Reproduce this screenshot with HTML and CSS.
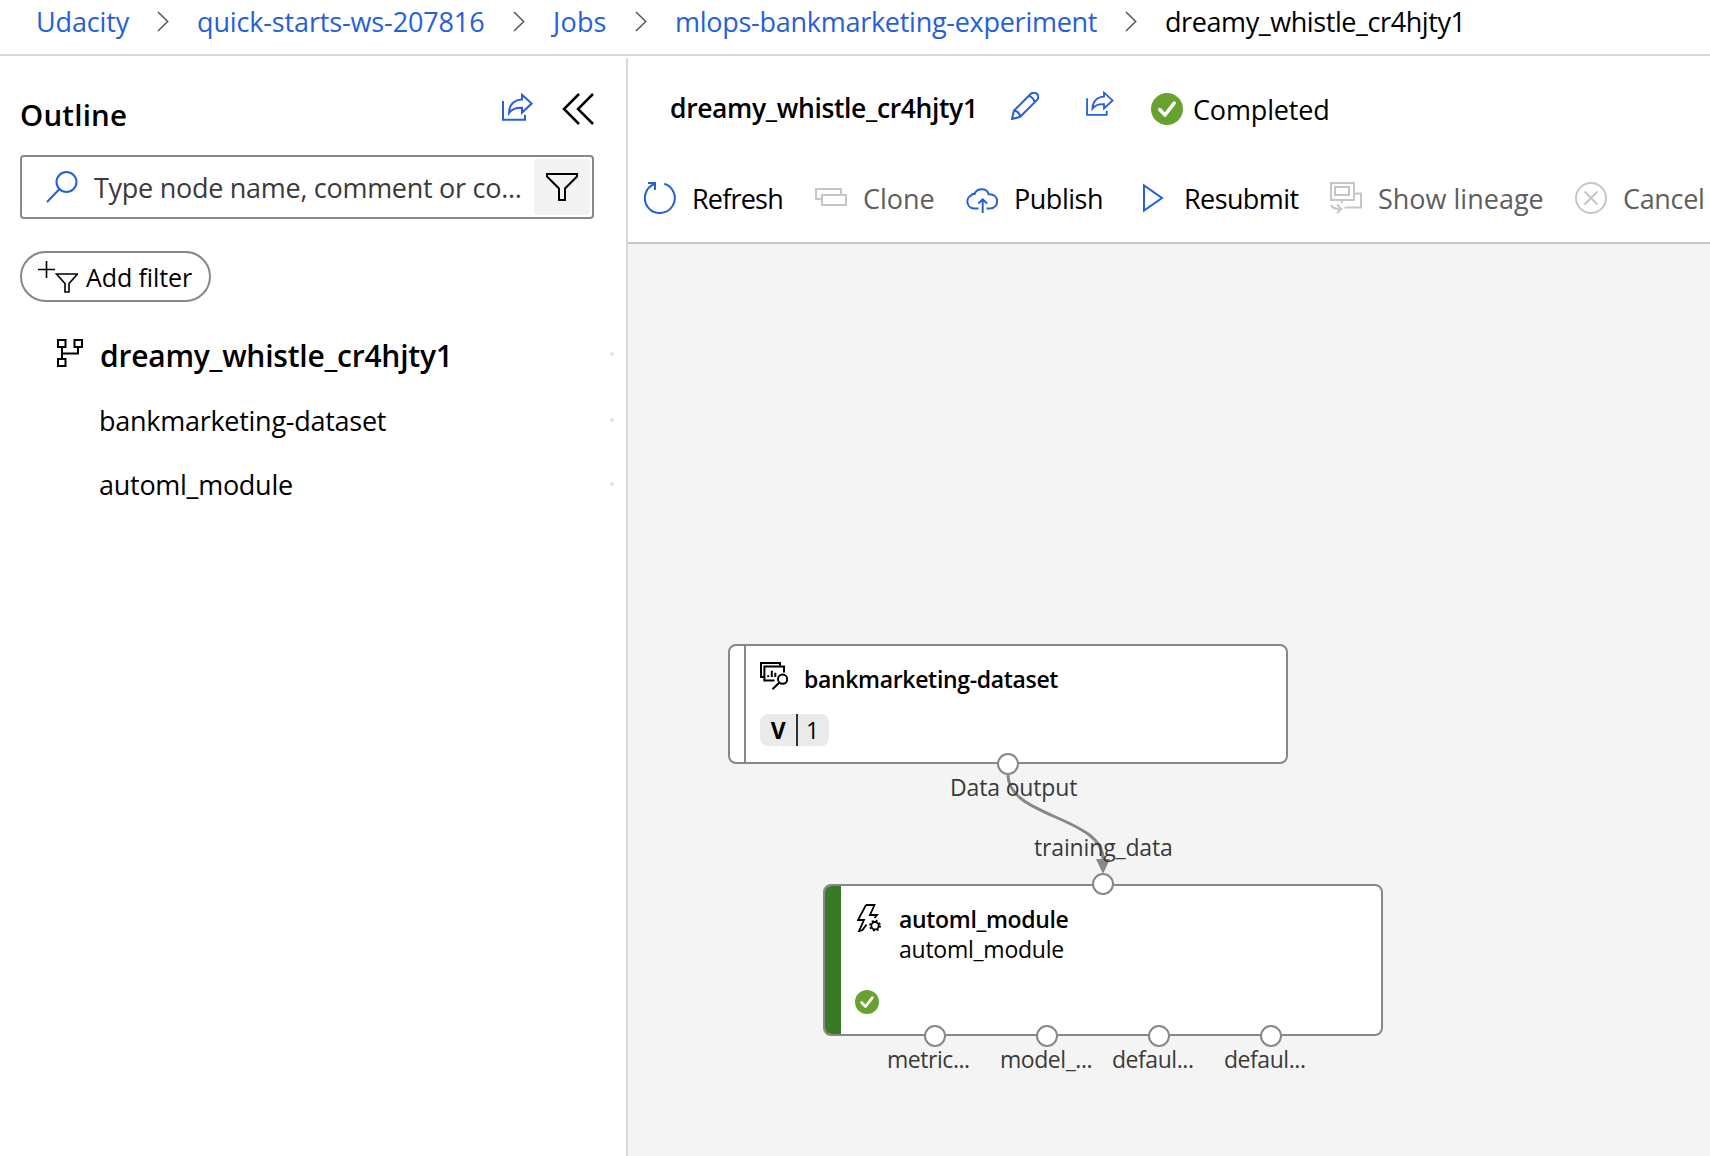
FILE: index.html
```html
<!DOCTYPE html>
<html lang="en">
<head>
<meta charset="utf-8">
<title>dreamy_whistle_cr4hjty1</title>
<link rel="stylesheet" href="styles.css">
</head>
<body>
<svg class="defs" width="0" height="0">
  <symbol id="share" viewBox="0 0 31 28"><path d="M1 8V26.8H23V22M20 1.8L29.6 10.6L20 19.6V14.8C14 14.6 9.5 16.3 7 20C7 12.5 11.5 6.8 20 6.4Z"/></symbol>
  <symbol id="check" viewBox="0 0 32 32"><circle cx="16" cy="16" r="16" fill="#69a12e"/><path d="M8.7 16.6L14 22L23.2 10.2" fill="none" stroke="#fff" stroke-width="3.6" stroke-linecap="round" stroke-linejoin="round"/></symbol>
  <symbol id="chevron" viewBox="0 0 12 21"><path d="M1 1L10.7 10.5L1 20"/></symbol>
</svg>

<nav class="breadcrumb">
  <div class="crumb crumb-org"><a>Udacity</a><svg class="sep"><use href="#chevron"/></svg></div>
  <div class="crumb crumb-workspace"><a>quick-starts-ws-207816</a><svg class="sep"><use href="#chevron"/></svg></div>
  <div class="crumb crumb-jobs"><a>Jobs</a><svg class="sep"><use href="#chevron"/></svg></div>
  <div class="crumb crumb-experiment"><a>mlops-bankmarketing-experiment</a><svg class="sep"><use href="#chevron"/></svg></div>
  <div class="crumb crumb-current">dreamy_whistle_cr4hjty1</div>
</nav>

<div class="workspace">
  <aside class="sidebar">
    <header class="outline-head">
      <h2>Outline</h2>
      <svg class="line-icon share-icon"><use href="#share"/></svg>
      <svg class="collapse-icon" viewBox="0 0 32 32"><path d="M17 1L2 16L17 31M31 1L16 16L31 31"/></svg>
    </header>
    <div class="search">
      <svg class="line-icon search-icon" viewBox="0 0 32 32"><circle cx="20.5" cy="11" r="10"/><path d="M13.5 18L1 31"/></svg>
      <span class="placeholder">Type node name, comment or co...</span>
      <div class="filter-btn"><svg viewBox="0 0 32 28"><path d="M1 1H31V3.5L19 15.5V27H13V15.5L1 3.5Z"/></svg></div>
    </div>
    <div class="add-filter">
      <svg viewBox="0 0 40 32"><path d="M8.5 0V17M0 8.5H17"/><path d="M18.5 13H39.5L31 22.5V31H27V22.5Z"/></svg>
      <span>Add filter</span>
    </div>
    <ul class="tree">
      <li class="root"><svg viewBox="0 0 26 28"><path d="M1 1H8.5V8H1ZM17.5 1H25V8H17.5ZM1 20H8.5V27H1ZM5 8V20M5 14.5H21V8"/></svg><span>dreamy_whistle_cr4hjty1</span><i></i></li>
      <li><span>bankmarketing-dataset</span><i></i></li>
      <li><span>automl_module</span><i></i></li>
    </ul>
  </aside>

  <main class="main">
    <header class="job-head">
      <h1>dreamy_whistle_cr4hjty1</h1>
      <svg class="line-icon pencil-icon" viewBox="0 0 28 28"><path d="M1 27L3 18.6L19.6 2C22 -.2 25 .6 26.2 2.2C27.6 4 27.4 6.6 25.6 8.4L9.2 24.8ZM3 18.6C6 18.8 8.9 21.6 9.2 24.8M17.6 4C20.5 4.3 23.3 7.2 23.6 10.3"/></svg>
      <svg class="line-icon share-small"><use href="#share"/></svg>
      <svg class="status-icon"><use href="#check"/></svg>
      <span class="status">Completed</span>
    </header>
    <div class="toolbar">
      <div class="tool tool-refresh"><svg viewBox="0 0 32 32"><path d="M10.5 2A15 15 0 1 0 20.3 1.7"/><path d="M4 1H11V8"/></svg><span>Refresh</span></div>
      <div class="tool tool-clone disabled"><svg viewBox="0 0 32 32"><path d="M7 17H1V7H26V12"/><path d="M7 13H31V23H7Z"/></svg><span>Clone</span></div>
      <div class="tool tool-publish"><svg viewBox="0 0 32 32"><path d="M12.5 26.5H8A7 7 0 0 1 5.8 13Q6.3 11.5 8.5 12C11 6 20.5 5.5 22.7 12.2C34 11.5 33.5 26.5 24 26.5H20.5M16.7 31V17.5M12.3 21.5L16.7 17.3L21.1 21.5"/></svg><span>Publish</span></div>
      <div class="tool tool-resubmit"><svg viewBox="0 0 32 32"><path d="M7 3.5V28.5L25 16Z"/></svg><span>Resubmit</span></div>
      <div class="tool tool-lineage disabled"><svg viewBox="0 0 32 32"><path d="M1 1H24V18H1Z"/><path d="M5 5H19V13H5Z"/><path d="M24 11.5H31V25.5H14.5M12 18V21"/><path d="M1 23Q3 27.3 11 27M7 22.5L11.3 27L7 31"/></svg><span>Show lineage</span></div>
      <div class="tool tool-cancel disabled"><svg viewBox="0 0 32 32"><circle cx="16" cy="16" r="15"/><path d="M9.5 9.5L22.5 22.5M22.5 9.5L9.5 22.5"/></svg><span>Cancel</span></div>
    </div>

    <section class="canvas">
      <article class="node dataset-node">
        <div class="stripe"></div>
        <div class="node-body">
          <div class="node-head">
            <svg class="dataset-icon" viewBox="0 0 28 28"><path d="M20 3.5V1H1V15H4"/><path d="M14.5 18.6H4.4V4.6H24V10.5"/><path d="M8.2 15V13.3M11.8 15V8.7M15.3 15V10.7"/><circle cx="22.6" cy="17.2" r="4.6"/><path d="M19.2 20.7L12.5 27.3"/></svg>
            <div class="node-title">bankmarketing-dataset</div>
          </div>
          <div class="version"><b>V</b><span>1</span></div>
        </div>
      </article>
      <article class="node automl-node">
        <div class="stripe"></div>
        <div class="node-body">
          <div class="node-head">
            <svg class="automl-icon" viewBox="0 0 24 28"><path d="M9 1H17.5L13 11H20L17.5 14M9 1L1 16H7L2 27.2L5.5 26L9.5 20.5"/><circle cx="18" cy="21.7" r="3.7"/><circle cx="18" cy="21.7" r="5" stroke-dasharray="1.95 1.977"/></svg>
            <div><div class="node-title">automl_module</div><div class="node-subtitle">automl_module</div></div>
          </div>
          <svg class="node-status"><use href="#check"/></svg>
        </div>
      </article>
      <svg class="edges" viewBox="0 0 1082 912">
        <path d="M380 531C380 573 475 573 475 615" fill="none" stroke="#8a8886" stroke-width="3"/>
        <path d="M468 615H482L475 630Z" fill="#8a8886"/>
      </svg>
      <span class="port-label label-output">Data output</span>
      <span class="port-label label-input">training_data</span>
      <i class="port port-output"></i>
      <i class="port port-input"></i>
      <i class="port port-metrics"></i>
      <i class="port port-model"></i>
      <i class="port port-default1"></i>
      <i class="port port-default2"></i>
      <span class="port-label label-metrics">metric...</span>
      <span class="port-label label-model">model_...</span>
      <span class="port-label label-default1">defaul...</span>
      <span class="port-label label-default2">defaul...</span>
    </section>
  </main>
</div>
</body>
</html>
```
FILE: styles.css
```css
* { box-sizing: border-box; }
body {
  margin: 0;
  height: 1156px;
  overflow: hidden;
  display: flex;
  flex-direction: column;
  background: #fff;
  color: #000;
  font: 27px/40px "Open Sans", "Noto Sans", sans-serif;
  letter-spacing: -0.25px;
  white-space: nowrap;
}
svg { flex: none; display: block; fill: none; stroke: currentColor; stroke-width: 2; }
.defs { position: absolute; }
h1, h2, ul { margin: 0; padding: 0; }
.line-icon { color: #2560da; }

/* Breadcrumb */
.breadcrumb {
  flex: none;
  height: 56px;
  padding: 0 0 10px 36px;
  border-bottom: 2px solid #d8d8d8;
  display: flex;
  align-items: center;
}
.crumb { display: flex; align-items: center; justify-content: space-between; }
.crumb a { color: #2560da; }
.crumb-org { width: 161px; letter-spacing: -0.15px; }
.crumb-workspace { width: 356px; letter-spacing: -0.14px; }
.crumb-jobs { width: 122px; letter-spacing: 0.2px; }
.crumb-experiment { width: 490px; letter-spacing: -0.27px; }
.crumb-current { letter-spacing: -0.41px; }
.sep { width: 12px; height: 21px; margin: 0 28px 2px 0; color: #555; stroke-width: 1.5; }
.crumb-workspace .sep { margin-right: 28px; }

.workspace { flex: 1; min-height: 0; margin-top: 2px; display: flex; }

/* Outline sidebar */
.sidebar { flex: none; width: 628px; padding-left: 20px; border-right: 2px solid #d8d8d8; }
.outline-head { height: 97px; display: flex; align-items: flex-start; }
.outline-head h2 { width: 482px; margin-top: 37px; font-size: 29.5px; font-weight: 600; letter-spacing: 0.2px; }
.share-icon { width: 31px; height: 28px; margin-top: 35px; }
.collapse-icon { width: 32px; height: 32px; margin: 35px 0 0 29px; stroke-width: 2.5; }
.search {
  width: 574px;
  height: 64px;
  padding: 0 2px 0 24px;
  border: 2px solid #8a8886;
  border-radius: 4px;
  display: flex;
  align-items: center;
}
.search-icon { width: 32px; height: 32px; }
.placeholder { flex: 1; padding: 2px 0 0 16px; color: #3b3a39; letter-spacing: -0.28px; }
.filter-btn {
  width: 56px;
  height: 56px;
  background: #f3f3f3;
  border-radius: 3px;
  display: flex;
  align-items: center;
  justify-content: center;
}
.filter-btn svg { width: 32px; height: 28px; }
.add-filter {
  width: 191px;
  height: 51px;
  margin-top: 32px;
  padding-left: 16px;
  border: 2px solid #8a8886;
  border-radius: 26px;
  display: flex;
  align-items: center;
  font-size: 25px;
  letter-spacing: -0.1px;
}
.add-filter svg { width: 40px; height: 32px; stroke-width: 1.6; }
.add-filter span { padding-left: 8px; }
.tree { list-style: none; margin-top: 20px; padding-right: 12px; }
.tree li { height: 64px; padding-left: 79px; display: flex; align-items: center; justify-content: space-between; letter-spacing: -0.27px; }
.tree li span { padding-top: 2px; }
.tree .root { height: 66px; padding-left: 37px; font-size: 30px; font-weight: 600; letter-spacing: -0.23px; }
.root svg { width: 26px; height: 28px; margin-bottom: 4px; }
.tree .root span { flex: 1; padding-left: 17px; }
.tree i { width: 4px; height: 4px; border-radius: 50%; background: #e4e4e4; }
.tree .root i { margin-bottom: 3px; }

/* Job header and toolbar */
.main { flex: 1; min-width: 0; display: flex; flex-direction: column; }
.job-head { flex: none; height: 97px; padding-left: 42px; display: flex; align-items: center; }
.job-head h1 { width: 341px; padding-top: 2px; font-size: 26.5px; font-weight: 600; letter-spacing: -0.37px; }
.pencil-icon { width: 28px; height: 28px; margin-bottom: 1px; }
.share-small { width: 28px; height: 25px; margin: 0 0 6px 47px; }
.status-icon { width: 32px; height: 32px; margin: 5px 0 0 37px; stroke: none; }
.status { padding: 6px 0 0 10px; letter-spacing: -0.15px; }
.toolbar { flex: none; height: 89px; padding-left: 16px; border-bottom: 2px solid #c8c8c8; display: flex; align-items: center; }
.tool { flex: none; display: flex; align-items: center; gap: 16px; }
.tool svg { width: 32px; height: 32px; margin-bottom: 2px; color: #2560da; }
.tool.disabled { color: #605e5c; }
.tool.disabled svg { color: #c8c6c4; }
.tool-refresh { width: 171px; letter-spacing: -0.8px; }
.tool-clone { width: 151px; letter-spacing: 0; }
.tool-publish { width: 171px; letter-spacing: -0.47px; }
.tool-resubmit { width: 193px; letter-spacing: -0.6px; gap: 15px; }
.tool-lineage { width: 245px; letter-spacing: 0; }
.tool-cancel { letter-spacing: -0.33px; }

/* Pipeline graph */
.canvas { position: relative; flex: 1; overflow: hidden; background: #f4f4f4; }
.node {
  position: absolute;
  width: 560px;
  background: #fff;
  border: 2px solid #8a8886;
  border-radius: 8px;
  overflow: hidden;
  display: flex;
}
.stripe { flex: none; width: 16px; }
.node-head { display: flex; align-items: flex-start; }
.node-title, .node-subtitle { font-size: 23px; line-height: 30px; }
.node-title { font-weight: 600; letter-spacing: -0.33px; }
.node-subtitle { letter-spacing: -0.25px; }
.dataset-node { left: 100px; top: 400px; height: 120px; }
.dataset-node .stripe { border-right: 2px solid #8a8886; }
.dataset-node .node-body { padding: 16px 0 0 14px; }
.dataset-icon { width: 28px; height: 28px; }
.dataset-node .node-title { padding: 2px 0 0 16px; }
.version {
  width: 69px;
  height: 32px;
  margin-top: 20px;
  display: flex;
  background: #eaeaea;
  border-radius: 8px;
  font-size: 23px;
  line-height: 32px;
}
.version b { width: 38px; border-right: 2px solid #323130; text-align: center; }
.version span { flex: 1; text-align: center; padding-right: 2px; }
.automl-node { left: 195px; top: 640px; height: 152px; }
.automl-node .stripe { background: #387b27; }
.automl-node .node-body { padding: 18px 0 0 14px; }
.automl-icon { width: 24px; height: 28px; margin-left: 2px; stroke-width: 1.8; }
.automl-node .node-head > div { padding-left: 18px; }
.node-status { width: 24px; height: 24px; margin-top: 26px; stroke: none; }
.edges { position: absolute; left: 0; top: 0; width: 1082px; height: 912px; stroke: none; }
.port {
  position: absolute;
  width: 22px;
  height: 22px;
  margin: -11px 0 0 -11px;
  border: 2px solid #8a8886;
  border-radius: 50%;
  background: #fff;
}
.port-output { left: 380px; top: 520px; }
.port-input { left: 475px; top: 640px; }
.port-metrics { left: 307px; top: 792px; }
.port-model { left: 419px; top: 792px; }
.port-default1 { left: 531px; top: 792px; }
.port-default2 { left: 643px; top: 792px; }
.port-label { position: absolute; font-size: 23px; line-height: 30px; letter-spacing: -0.45px; color: #3b3a39; }
.label-output { left: 322px; top: 528px; letter-spacing: -0.15px; }
.label-input { left: 406px; top: 588px; letter-spacing: -0.15px; }
.label-metrics { left: 259px; top: 800px; }
.label-model { left: 372px; top: 800px; }
.label-default1 { left: 484px; top: 800px; }
.label-default2 { left: 596px; top: 800px; }
```
